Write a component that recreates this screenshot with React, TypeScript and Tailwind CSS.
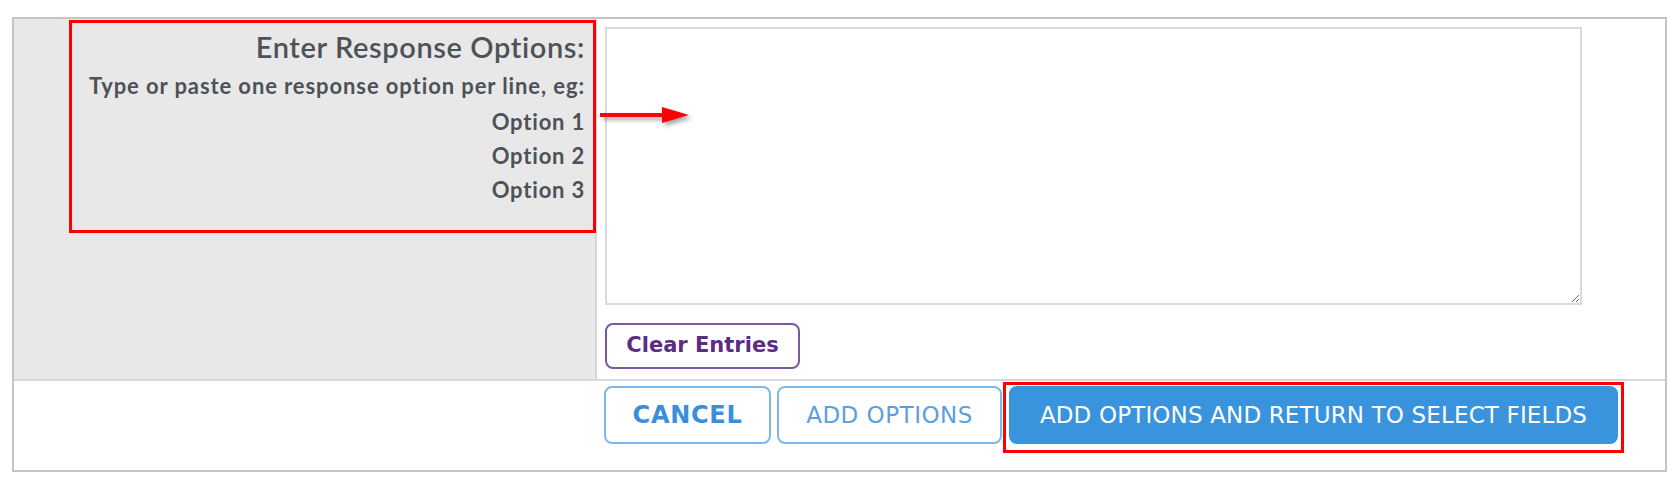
import React from "react";

export default function App() {
  return (
    <div className="relative w-[1680px] h-[488px] bg-white pl-[12px] pt-[17px]">
      <div className="w-[1655px] h-[455px] border-2 border-[#c4c4c4] flex flex-col">
        <div className="grid grid-cols-[583px_1fr] h-[362px] border-b-2 border-[#d8d8d8]">
          <div
            className="bg-[#e8e8e8] border-r-2 border-[#d6d6d6] text-right pr-[10px] pt-[10px] text-[#4d5258]"
            style={{ fontFamily: "Lato, 'Noto Sans', sans-serif" }}
          >
            <div className="text-[29px] leading-[36px] font-semibold tracking-[0.6px]">Enter Response Options:</div>
            <div className="mt-[3px] text-[22px] leading-[36px] font-bold tracking-[0.9px]">
              Type or paste one response option per line, eg:
            </div>
            <div className="mt-[1px] text-[22px] leading-[34px] font-bold tracking-[0.8px]">Option 1</div>
            <div className="text-[22px] leading-[34px] font-bold tracking-[0.8px]">Option 2</div>
            <div className="text-[22px] leading-[34px] font-bold tracking-[0.8px]">Option 3</div>
          </div>
          <div className="bg-white pl-[8px] pt-[8px]">
            <textarea className="block w-[977px] h-[278px] border-2 border-[#dadada] bg-white outline-none" />
            <button
              className="mt-[18px] w-[195px] h-[46px] border-2 border-[#7a5a9c] rounded-[8px] text-[#5a2d82] text-[21px] font-bold bg-white"
              style={{ fontFamily: "'DejaVu Sans', sans-serif" }}
            >
              Clear Entries
            </button>
          </div>
        </div>
        <div className="flex-1 flex pl-[590px] pt-[5px]" style={{ fontFamily: "'DejaVu Sans', sans-serif" }}>
          <button className="w-[167px] h-[58px] border-2 border-[#7db8ec] rounded-[8px] bg-white text-[#3a8fdc] text-[24px] font-bold tracking-[0.7px]">
            CANCEL
          </button>
          <button className="ml-[6px] w-[225px] h-[58px] border-2 border-[#7db8ec] rounded-[8px] bg-white text-[#5a9fe2] text-[23px] font-normal tracking-[0.5px]">
            ADD OPTIONS
          </button>
          <button className="ml-[7px] w-[609px] h-[58px] rounded-[8px] bg-[#3993dd] text-white text-[23px] font-normal tracking-[0.15px]">
            ADD OPTIONS AND RETURN TO SELECT FIELDS
          </button>
        </div>
      </div>

      <div className="absolute left-[69px] top-[20px] w-[527px] h-[213px] border-[3px] border-[#ff0000] pointer-events-none" />
      <div className="absolute left-[1003px] top-[382px] w-[621px] h-[71px] border-[3px] border-[#ff0000] pointer-events-none" />
      <svg
        className="absolute left-[598px] top-[100px] pointer-events-none"
        width="100"
        height="32"
        viewBox="0 0 100 32"
        style={{ filter: "drop-shadow(3px 3px 2px rgba(0,0,0,0.35))" }}
      >
        <rect x="2" y="13" width="64" height="4" fill="#ff0000" />
        <polygon points="64,7 91,15 64,23" fill="#ff0000" />
      </svg>
    </div>
  );
}
